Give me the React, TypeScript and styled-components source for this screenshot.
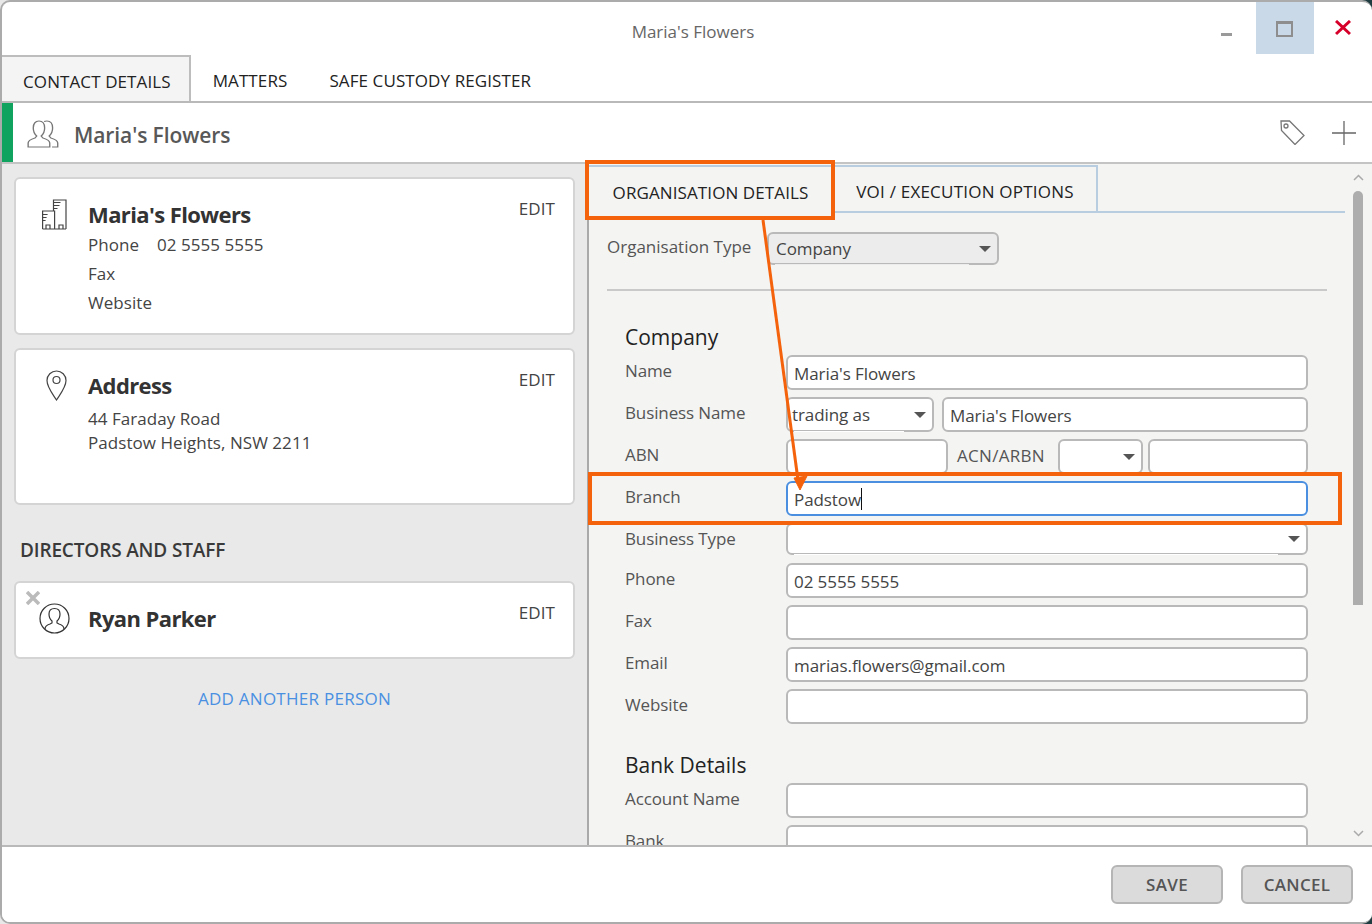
import React from "react";
import styled, { createGlobalStyle } from "styled-components";

const GlobalStyle = createGlobalStyle`
  html, body {
    margin: 0;
    padding: 0;
    width: 1372px;
    height: 924px;
    overflow: hidden;
    background: linear-gradient(to right, #e8e8e8 0, #e8e8e8 1300px, #1f3d40 1300px);
    font-family: "Open Sans", "Noto Sans", sans-serif;
  }
  * {
    box-sizing: border-box;
  }
`;

const Window = styled.div`
  position: relative;
  display: flex;
  flex-direction: column;
  width: 1372px;
  height: 924px;
  background: #fff;
  border: 2px solid #ababab;
  border-right: none;
  border-radius: 10px;
  overflow: hidden;
`;

const TitleBar = styled.div`
  display: grid;
  grid-template-columns: 1fr auto 1fr;
  height: 53px;
  flex: none;
`;

const Title = styled.div`
  grid-column: 2;
  padding: 18px 0 0 12px;
  font-size: 17px;
  color: #666;
`;

const Controls = styled.div`
  grid-column: 3;
  display: flex;
  justify-content: flex-end;
`;

const ControlButton = styled.button<{ $active?: boolean }>`
  display: flex;
  align-items: center;
  justify-content: center;
  width: 58px;
  height: 52px;
  padding: 0;
  border: none;
  background: ${(p) => (p.$active ? "#c9d9e8" : "transparent")};
`;

const MinimizeGlyph = styled.span`
  width: 11px;
  height: 3px;
  margin-top: 13px;
  margin-right: 2px;
  background: #9a9a9a;
`;

const MaximizeGlyph = styled.span`
  width: 17px;
  height: 16px;
  margin-top: 1px;
  margin-right: 2px;
  border: 2px solid #8e8e8e;
  border-top-width: 3px;
`;

const TopTabs = styled.div`
  display: flex;
  height: 48px;
  flex: none;
  border-bottom: 2px solid #b9b9b9;
`;

const TopTab = styled.div<{ $active?: boolean }>`
  display: flex;
  align-items: center;
  height: 46px;
  padding: ${(p) => (p.$active ? "4px 18px 0 21px" : "4px 20px 0 22px")};
  font-size: 17px;
  letter-spacing: 0.1px;
  color: #222;
  background: ${(p) => (p.$active ? "#f4f4f4" : "transparent")};
  border-top: ${(p) => (p.$active ? "2px solid #bdbdbd" : "none")};
  border-right: ${(p) => (p.$active ? "2px solid #bdbdbd" : "none")};
`;

const Header = styled.div`
  display: flex;
  align-items: center;
  height: 61px;
  flex: none;
  border-bottom: 2px solid #c4c4c4;
`;

const GreenBar = styled.div`
  align-self: stretch;
  width: 11px;
  background: #0fa35f;
`;

const HeaderIcon = styled.div`
  margin-left: 14px;
  padding-top: 3px;
  line-height: 0;
`;

const HeaderName = styled.div`
  flex: 1;
  margin-left: 14px;
  padding-top: 5px;
  font-size: 21px;
  font-weight: 600;
  letter-spacing: -0.1px;
  color: #585858;
`;

const HeaderTools = styled.div`
  display: flex;
  align-items: center;
  gap: 27px;
  margin-right: 16px;
`;

const Body = styled.div`
  display: flex;
  flex: 1;
  min-height: 0;
`;

const LeftPanel = styled.div`
  width: 587px;
  flex: none;
  padding: 13px 12px 0 12px;
  background: #e9e9e9;
  border-right: 2px solid #a9a9a9;
`;

const Card = styled.div<{ $height: number; $top: number }>`
  display: flex;
  height: ${(p) => p.$height}px;
  padding: ${(p) => p.$top}px 18px 0 0;
  margin-bottom: 13px;
  background: #fff;
  border: 2px solid #d4d4d4;
  border-radius: 6px;
  position: relative;
`;

const CardIcon = styled.div<{ $left: number }>`
  width: 72px;
  flex: none;
  padding-left: ${(p) => p.$left}px;
`;

const CardBody = styled.div`
  flex: 1;
`;

const CardTitle = styled.div`
  font-size: 22px;
  line-height: 30px;
  font-weight: 700;
  letter-spacing: -0.6px;
  color: #333;
`;

const InfoBlock = styled.div<{ $top: number }>`
  margin-top: ${(p) => p.$top}px;
`;

const InfoLine = styled.div<{ $pitch: number }>`
  display: flex;
  font-size: 17px;
  line-height: ${(p) => p.$pitch}px;
  letter-spacing: 0.05px;
  color: #444;
`;

const InfoLabel = styled.span`
  width: 69px;
`;

const EditLink = styled.div`
  margin-top: -1px;
  font-size: 17px;
  line-height: 22px;
  letter-spacing: 0.1px;
  color: #444;
`;

const RemoveButton = styled.div`
  position: absolute;
  left: 10px;
  top: 8px;
  line-height: 0;
`;

const SectionHeading = styled.div`
  margin: 32px 0 18px 6px;
  font-size: 19px;
  line-height: 26px;
  font-weight: 600;
  letter-spacing: -0.15px;
  color: #3a3a3a;
`;

const AddLink = styled.div`
  margin-top: 28px;
  text-align: center;
  font-size: 17px;
  letter-spacing: 0.27px;
  color: #4a90e2;
`;

const RightPanel = styled.div`
  display: flex;
  flex: 1;
  min-width: 0;
  background: #f4f4f3;
`;

const FormArea = styled.div`
  flex: 1;
  min-width: 0;
  overflow: hidden;
`;

const InnerTabs = styled.div`
  display: flex;
  height: 48px;
  margin: 1px 5px 0 0;
  border-bottom: 2px solid #b9cde0;
`;

const InnerTab = styled.div<{ $active?: boolean }>`
  display: flex;
  align-items: center;
  justify-content: center;
  width: ${(p) => (p.$active ? "245px" : "264px")};
  height: ${(p) => (p.$active ? "48px" : "46px")};
  padding-top: 4px;
  font-size: 17px;
  letter-spacing: ${(p) => (p.$active ? "0.1px" : "0.22px")};
  color: #222;
  background: #f4f4f3;
  border-top: 2px solid #b9cde0;
  border-right: 2px solid #b9cde0;
`;

const Content = styled.div`
  padding: 19px 23px 0 18px;
`;

const TypeRow = styled.div`
  display: flex;
`;

const TypeLabel = styled.div`
  width: 160px;
  flex: none;
  font-size: 17px;
  line-height: 30px;
  color: #555;
`;

const Divider = styled.div`
  height: 2px;
  margin-top: 24px;
  background: #c9c9c9;
`;

const Section = styled.div`
  padding: 0 19px 0 18px;
`;

const SectionTitle = styled.div<{ $top: number }>`
  margin-top: ${(p) => p.$top}px;
  font-size: 21px;
  line-height: 36px;
  color: #222;
`;

const Row = styled.div<{ $gap?: number }>`
  display: grid;
  grid-template-columns: 161px 1fr;
  margin-bottom: ${(p) => p.$gap ?? 7}px;
`;

const RowLabel = styled.div`
  font-size: 17px;
  line-height: 32px;
  letter-spacing: -0.12px;
  color: #555;
`;

const Inline = styled.div`
  display: flex;
  align-items: flex-start;
`;

const InlineLabel = styled.div`
  width: 110px;
  flex: none;
  padding-left: 9px;
  font-size: 17px;
  line-height: 34px;
  letter-spacing: 0.3px;
  color: #555;
`;

const Field = styled.div<{ $focused?: boolean; $width?: number }>`
  display: flex;
  align-items: center;
  height: 35px;
  flex: ${(p) => (p.$width ? "none" : "1")};
  width: ${(p) => (p.$width ? `${p.$width}px` : "auto")};
  padding: 1px 6px 0;
  font-size: 17px;
  letter-spacing: -0.08px;
  color: #444;
  background: #fff;
  border: 2px solid ${(p) => (p.$focused ? "#4a8fe0" : "#b9b9b9")};
  border-radius: 6px;
`;

const Caret = styled.span`
  width: 1px;
  height: 22px;
  background: #111;
`;

const Select = styled.div<{
  $width?: number;
  $height?: number;
  $fill?: string;
  $mx?: number;
  $pad?: number;
}>`
  position: relative;
  display: flex;
  align-items: center;
  height: ${(p) => p.$height ?? 35}px;
  flex: ${(p) => (p.$width ? "none" : "1")};
  width: ${(p) => (p.$width ? `${p.$width}px` : "auto")};
  margin-right: ${(p) => p.$mx ?? 0}px;
  padding: 0 7px 0 ${(p) => p.$pad ?? 7}px;
  font-size: 17px;
  letter-spacing: -0.08px;
  color: #444;
  background: ${(p) => p.$fill ?? "#fff"};
  border: 2px solid #b9b9b9;
  border-radius: 6px;

  &::before {
    content: "";
    position: absolute;
    left: 6px;
    right: 28px;
    bottom: -2px;
    height: 1px;
    background: ${(p) => p.$fill ?? "#fff"};
  }

  &::after {
    content: "";
    position: absolute;
    right: 6px;
    top: 50%;
    margin-top: -3px;
    border-left: 6px solid transparent;
    border-right: 6px solid transparent;
    border-top: 6px solid #555;
  }
`;

const Scrollbar = styled.div`
  display: flex;
  flex-direction: column;
  align-items: center;
  width: 22px;
  flex: none;
  padding: 10px 6px 0 0;
`;

const ScrollThumb = styled.div`
  width: 10px;
  height: 414px;
  margin-top: 10px;
  margin-bottom: 225px;
  background: #adadad;
  border-radius: 5px 5px 0 0;
`;

const Footer = styled.div`
  display: flex;
  justify-content: flex-end;
  gap: 18px;
  height: 77px;
  flex: none;
  padding: 18px 19px 0 0;
  background: #fff;
  border-top: 2px solid #b9b9b9;
`;

const ActionButton = styled.button`
  width: 112px;
  height: 39px;
  padding: 0;
  font-family: inherit;
  font-size: 17px;
  font-weight: 600;
  letter-spacing: 0.3px;
  color: #555;
  background: #dbdbdb;
  border: 2px solid #b5b5b5;
  border-radius: 6px;
`;

const Callout = styled.div<{ $x: number; $y: number; $w: number; $h: number }>`
  position: absolute;
  left: ${(p) => p.$x}px;
  top: ${(p) => p.$y}px;
  width: ${(p) => p.$w}px;
  height: ${(p) => p.$h}px;
  border: 4px solid #f5620c;
  pointer-events: none;
`;

const ArrowLayer = styled.svg`
  position: absolute;
  left: 0;
  top: 0;
  pointer-events: none;
`;

const PeopleIcon = () => (
  <svg width="33" height="28" viewBox="0 0 29 28" preserveAspectRatio="none" fill="none" stroke="#777" strokeWidth="1.2">
    <path d="M1 27v-4c0-3 3-4 6-5l1.500-2C6.500 14 5.500 11 5.500 8 5.500 3.500 7.500 1 10.500 1s5 2.500 5 7c0 3-1 6-3 8l1.500 2c3 1 6 2 6 5v4z" />
    <path d="M15 1.500c1-.5 1.500-.5 2.500-.5 3 0 5 2.500 5 7 0 3-1 6-3 8l1.500 2c3 1 6 2 6 5v4h-5" />
  </svg>
);

const TagIcon = () => (
  <svg width="25" height="25" viewBox="0 0 25 25" fill="none" stroke="#777" strokeWidth="1.300">
    <path d="M1 1h8.500L24 15.500 15 24.500 1.500 10.500z" />
    <circle cx="6" cy="6" r="2" />
  </svg>
);

const PlusIcon = () => (
  <svg width="24" height="24" viewBox="0 0 24 24" stroke="#666" strokeWidth="1.300">
    <path d="M0 12h24M12 0v24" />
  </svg>
);

const BuildingIcon = () => (
  <svg width="25" height="31" viewBox="0 0 25 31" fill="none" stroke="#444" strokeWidth="1.200">
    <path d="M11.500 12V1h12.500v29" />
    <path d="M.600 30V12h12v18" />
    <path d="M.600 30h23.400" />
    <path d="M11.500 3.500h7M11.500 6.500h6M11.500 9.500h4M.600 15.500h5M.600 18.500h4M.600 21.500h3" />
    <path d="M4 30v-4h4v4M17 30v-4h4v4" />
  </svg>
);

const PinIcon = () => (
  <svg width="21" height="31" viewBox="0 0 21 31" fill="none" stroke="#444" strokeWidth="1.200">
    <path d="M10.500 30C6 23 1 17 1 10.500a9.500 9.500 0 0 1 19 0C20 17 15 23 10.500 30z" />
    <circle cx="10.500" cy="10" r="3.500" />
  </svg>
);

const PersonIcon = () => (
  <svg width="31" height="31" viewBox="0 0 31 31" fill="none" stroke="#333" strokeWidth="1.200">
    <circle cx="15.500" cy="15.500" r="14.500" />
    <path d="M6 26c0-3 2-4 5-5l2-1v-2c-2-1.500-3-4-3-7 0-3.500 2-5.500 5.500-5.500S21 7.500 21 11c0 3-1 5.500-3 7v2l2 1c3 1 5 2 5 5" />
  </svg>
);

const CrossIcon = () => (
  <svg width="14" height="14" viewBox="0 0 14 14" stroke="#bbb" strokeWidth="3.500">
    <path d="M1 1l12 12M13 1L1 13" />
  </svg>
);

const CloseIcon = () => (
  <svg width="16" height="16" viewBox="0 0 16 16" stroke="#d6002a" strokeWidth="3">
    <path d="M1 1l14 13M15 1L1 14" />
  </svg>
);

const Chevron = ({ down }: { down?: boolean }) => (
  <svg width="11" height="7" viewBox="0 0 11 7" fill="none" stroke="#aaa" strokeWidth="1.500">
    <path d={down ? "M1 1l4.500 4.500L10 1" : "M1 6l4.500-4.500L10 6"} />
  </svg>
);

export default function App() {
  return (
    <>
      <GlobalStyle />
      <Window>
        <TitleBar>
          <Title>Maria's Flowers</Title>
          <Controls>
            <ControlButton>
              <MinimizeGlyph />
            </ControlButton>
            <ControlButton $active>
              <MaximizeGlyph />
            </ControlButton>
            <ControlButton>
              <CloseIcon />
            </ControlButton>
          </Controls>
        </TitleBar>

        <TopTabs>
          <TopTab $active>CONTACT DETAILS</TopTab>
          <TopTab>MATTERS</TopTab>
          <TopTab>SAFE CUSTODY REGISTER</TopTab>
        </TopTabs>

        <Header>
          <GreenBar />
          <HeaderIcon>
            <PeopleIcon />
          </HeaderIcon>
          <HeaderName>Maria's Flowers</HeaderName>
          <HeaderTools>
            <TagIcon />
            <PlusIcon />
          </HeaderTools>
        </Header>

        <Body>
          <LeftPanel>
            <Card $height={158} $top={20}>
              <CardIcon $left={26}>
                <BuildingIcon />
              </CardIcon>
              <CardBody>
                <CardTitle>Maria's Flowers</CardTitle>
                <InfoBlock $top={1}>
                  <InfoLine $pitch={29}>
                    <InfoLabel>Phone</InfoLabel>02 5555 5555
                  </InfoLine>
                  <InfoLine $pitch={29}>Fax</InfoLine>
                  <InfoLine $pitch={29}>Website</InfoLine>
                </InfoBlock>
              </CardBody>
              <EditLink>EDIT</EditLink>
            </Card>

            <Card $height={157} $top={20}>
              <CardIcon $left={30}>
                <PinIcon />
              </CardIcon>
              <CardBody>
                <CardTitle>Address</CardTitle>
                <InfoBlock $top={7}>
                  <InfoLine $pitch={24}>44 Faraday Road</InfoLine>
                  <InfoLine $pitch={24}>Padstow Heights, NSW 2211</InfoLine>
                </InfoBlock>
              </CardBody>
              <EditLink>EDIT</EditLink>
            </Card>

            <SectionHeading>DIRECTORS AND STAFF</SectionHeading>

            <Card $height={78} $top={20}>
              <RemoveButton>
                <CrossIcon />
              </RemoveButton>
              <CardIcon $left={23}>
                <PersonIcon />
              </CardIcon>
              <CardBody>
                <CardTitle>Ryan Parker</CardTitle>
              </CardBody>
              <EditLink>EDIT</EditLink>
            </Card>

            <AddLink>ADD ANOTHER PERSON</AddLink>
          </LeftPanel>

          <RightPanel>
            <FormArea>
              <InnerTabs>
                <InnerTab $active>ORGANISATION DETAILS</InnerTab>
                <InnerTab>VOI / EXECUTION OPTIONS</InnerTab>
              </InnerTabs>
              <Content>
                <TypeRow>
                  <TypeLabel>Organisation Type</TypeLabel>
                  <Select $width={232} $height={33} $fill="#ececec">
                    Company
                  </Select>
                </TypeRow>
                <Divider />
                <Section>
                  <SectionTitle $top={28}>Company</SectionTitle>
                  <Row>
                    <RowLabel>Name</RowLabel>
                    <Field>Maria's Flowers</Field>
                  </Row>
                  <Row>
                    <RowLabel>Business Name</RowLabel>
                    <Inline>
                      <Select $width={148} $mx={8} $pad={4}>
                        trading as
                      </Select>
                      <Field>Maria's Flowers</Field>
                    </Inline>
                  </Row>
                  <Row>
                    <RowLabel>ABN</RowLabel>
                    <Inline>
                      <Field $width={162} />
                      <InlineLabel>ACN/ARBN</InlineLabel>
                      <Select $width={85} $mx={5} />
                      <Field />
                    </Inline>
                  </Row>
                  <Row>
                    <RowLabel>Branch</RowLabel>
                    <Field $focused>
                      Padstow
                      <Caret />
                    </Field>
                  </Row>
                  <Row $gap={8}>
                    <RowLabel>Business Type</RowLabel>
                    <Select $height={32} />
                  </Row>
                  <Row>
                    <RowLabel>Phone</RowLabel>
                    <Field>02 5555 5555</Field>
                  </Row>
                  <Row>
                    <RowLabel>Fax</RowLabel>
                    <Field />
                  </Row>
                  <Row>
                    <RowLabel>Email</RowLabel>
                    <Field>marias.flowers@gmail.com</Field>
                  </Row>
                  <Row $gap={0}>
                    <RowLabel>Website</RowLabel>
                    <Field />
                  </Row>
                  <SectionTitle $top={23}>Bank Details</SectionTitle>
                  <Row>
                    <RowLabel>Account Name</RowLabel>
                    <Field />
                  </Row>
                  <Row>
                    <RowLabel>Bank</RowLabel>
                    <Field />
                  </Row>
                </Section>
              </Content>
            </FormArea>
            <Scrollbar>
              <Chevron />
              <ScrollThumb />
              <Chevron down />
            </Scrollbar>
          </RightPanel>
        </Body>

        <Footer>
          <ActionButton>SAVE</ActionButton>
          <ActionButton>CANCEL</ActionButton>
        </Footer>

        <Callout $x={583} $y={158} $w={250} $h={60} />
        <Callout $x={586} $y={470} $w={754} $h={53} />
        <ArrowLayer width="1372" height="924">
          <path d="M761 218L796 478" stroke="#f5620c" strokeWidth="3" fill="none" />
          <path d="M792 476L805 474L798 488Z" fill="#f5620c" stroke="#f5620c" />
        </ArrowLayer>
      </Window>
    </>
  );
}
